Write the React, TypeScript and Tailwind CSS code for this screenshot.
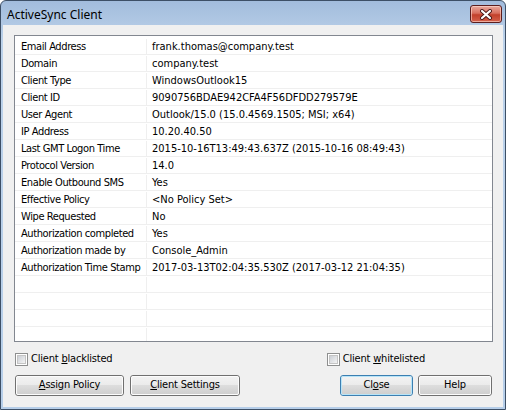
import React from 'react';

const rows: [string, string][] = [
  ['Email Address', 'frank.thomas@company.test'],
  ['Domain', 'company.test'],
  ['Client Type', 'WindowsOutlook15'],
  ['Client ID', '9090756BDAE942CFA4F56DFDD279579E'],
  ['User Agent', 'Outlook/15.0 (15.0.4569.1505; MSI; x64)'],
  ['IP Address', '10.20.40.50'],
  ['Last GMT Logon Time', '2015-10-16T13:49:43.637Z (2015-10-16 08:49:43)'],
  ['Protocol Version', '14.0'],
  ['Enable Outbound SMS', 'Yes'],
  ['Effective Policy', '<No Policy Set>'],
  ['Wipe Requested', 'No'],
  ['Authorization completed', 'Yes'],
  ['Authorization made by', 'Console_Admin'],
  ['Authorization Time Stamp', '2017-03-13T02:04:35.530Z (2017-03-12 21:04:35)'],
  ['', ''],
  ['', ''],
  ['', ''],
  ['', ''],
];

const font = { fontFamily: '"DejaVu Sans Condensed", "Liberation Sans", Arial, sans-serif' };

function Checkbox({ pre, key1, post }: { pre: string; key1: string; post: string }) {
  return (
    <label className="flex items-center gap-[3px] h-[13px] text-[11px] text-black tracking-[-0.2px]">
      <span className="w-[13px] h-[13px] shrink-0 border border-[#8e8f8f] bg-white p-[1px]">
        <span className="block w-full h-full border border-[#c4c4c4] bg-gradient-to-br from-[#cbcfd5] to-[#f4f4f4]" />
      </span>
      <span>
        {pre}
        <span className="underline">{key1}</span>
        {post}
      </span>
    </label>
  );
}

function Button({
  children,
  width,
  focused,
}: {
  children: React.ReactNode;
  width: string;
  focused?: boolean;
}) {
  return (
    <button
      className={`${width} h-[21px] rounded-[3px] border ${
        focused ? 'border-[#3c7fb1]' : 'border-[#707070]'
      } p-0 text-[11px] text-black tracking-[-0.2px]`}
    >
      <span
        className={`flex h-full w-full items-center justify-center rounded-[2px] border ${
          focused ? 'border-[#b7e4f8]' : 'border-[#fcfcfc]'
        } bg-[linear-gradient(#f2f2f2_0%,#ebebeb_49%,#dddddd_50%,#cfcfcf_100%)]`}
      >
        {children}
      </span>
    </button>
  );
}

export default function App() {
  return (
    <div
      className="w-[506px] h-[410px] flex flex-col rounded-t-[6px] border border-[#3d4f66] bg-[linear-gradient(#a2bcdc,#bcd2ea_40px,#b6cee9)] overflow-hidden"
      style={font}
    >
      <div className="h-[24px] shrink-0 flex items-start justify-between pl-[6px] pr-[3px]">
        <span
          className="text-[12px] leading-[16px] text-black mt-[6px]"
          style={{ fontFamily: '"Noto Sans", "Open Sans", sans-serif' }}
        >
          ActiveSync Client
        </span>
        <div className="w-[32px] h-[18px] mt-[4px] rounded-[3px] border border-[#5b1d1d] bg-[linear-gradient(#e9a99d,#d86f5e_45%,#c2402b_55%,#d4614c)] flex items-center justify-center shadow-[inset_0_0_0_1px_rgba(255,220,210,0.6)]">
          <svg width="14" height="11" viewBox="0 0 14 11">
            <path d="M3 2 L11 9 M11 2 L3 9" stroke="#4a1a1a" strokeWidth="4" strokeLinecap="round" />
            <path d="M3 2 L11 9 M11 2 L3 9" stroke="#ffffff" strokeWidth="2.2" strokeLinecap="round" />
          </svg>
        </div>
      </div>
      <div className="flex-1 min-h-0 mx-[2px] mb-[2px] bg-[#f0f0f0] flex flex-col pl-[11px] pr-[10px] pt-[10px]">
        <div className="h-[307px] shrink-0 border border-[#828790] bg-white overflow-hidden pt-[1px]">
          {rows.map(([k, v], i) => (
            <div
              key={i}
              className={`flex ${i === 0 ? 'h-[18px] pt-[2px]' : 'h-[17px] pt-[1px]'} border-b border-[#efefef] text-[11px] text-black leading-[15px]`}
            >
              <div className="w-[132px] shrink-0 border-r border-[#efefef] pl-[6px] whitespace-nowrap tracking-[-0.4px]">
                {k}
              </div>
              <div className="pl-[5px] whitespace-nowrap">{v}</div>
            </div>
          ))}
        </div>
        <div className="mt-[11px] flex justify-between pl-[1px] pr-[68px]">
          <Checkbox pre="Client " key1="b" post="lacklisted" />
          <Checkbox pre="Client " key1="w" post="hitelisted" />
        </div>
        <div className="mt-[9px] flex justify-between pl-[1px] pr-[1px]">
          <div className="flex gap-[6px]">
            <Button width="w-[109px]">
              <span>
                <span className="underline">A</span>ssign Policy
              </span>
            </Button>
            <Button width="w-[110px]">
              <span>
                <span className="underline">C</span>lient Settings
              </span>
            </Button>
          </div>
          <div className="flex gap-[5px]">
            <Button width="w-[73px]" focused>
              <span>
                Cl<span className="underline">o</span>se
              </span>
            </Button>
            <Button width="w-[74px]">Help</Button>
          </div>
        </div>
      </div>
    </div>
  );
}
